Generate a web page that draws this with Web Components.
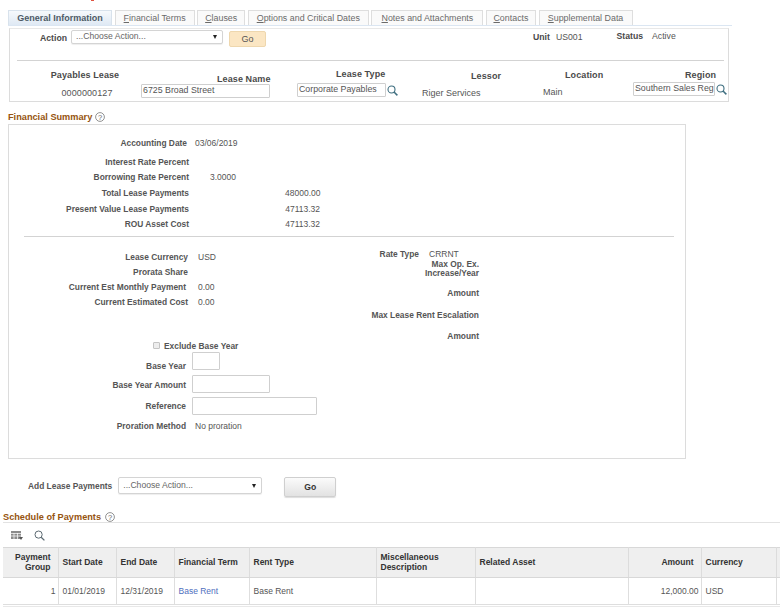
<!DOCTYPE html>
<html>
<head>
<meta charset="utf-8">
<title>Lease</title>
<style>
  html, body { margin: 0; padding: 0; background: #fff; }
  body { font: 8.5px "Liberation Sans", Arial, sans-serif; color: #555; width: 783px; height: 612px; overflow: hidden; }
</style>
</head>
<body>
<ps-tabs></ps-tabs>
<ps-lease-header></ps-lease-header>
<ps-title help-gap="3" left="8" top="9">Financial Summary</ps-title>
<ps-summary></ps-summary>
<ps-add-payments></ps-add-payments>
<ps-title help-gap="4" left="3" top="14">Schedule of Payments</ps-title>
<ps-schedule></ps-schedule>

<script>
const SEARCH_ICON = `<svg width="11" height="11" viewBox="0 0 11 11" fill="none" stroke="#3f6f80" stroke-width="1.1" style="flex:none"><circle cx="4.5" cy="4.5" r="3.5"/><path d="M7 7l3.4 3.4" stroke-width="1.5"/></svg>`;

class PsTabs extends HTMLElement {
    constructor() {
        super();
        this.attachShadow({ mode: 'open' });
    }

    connectedCallback() {
        const tabs = [
            ['General Information', 104, ''],
            ['Financial Terms', 80, 'F'],
            ['Clauses', 48, 'C'],
            ['Options and Critical Dates', 121, 'O'],
            ['Notes and Attachments', 112, 'N'],
            ['Contacts', 50, 'C'],
            ['Supplemental Data', 94, 'S']
        ];
        const html = tabs.map(([name, w, key], i) => {
            const label = key ? `<u>${key}</u>${name.slice(1)}` : name;
            return `<div class="tab ${i === 0 ? 'on' : ''}" style="width:${w}px">${label}</div>`;
        }).join('');
        this.shadowRoot.innerHTML = `
            <style>
                :host { display: block; height: 26px; width: 724px; margin-left: 8px; box-sizing: border-box; border-bottom: 1px solid #dbe6f2; position: relative; }
                .row { display: flex; gap: 2.6px; padding-top: 10px; }
                .tab { height: 15px; line-height: 15px; box-sizing: border-box; border: 1px solid #dedede; border-bottom: 0; text-align: center; font-size: 8.9px; color: #6a6a6a; background: #fafafa; white-space: nowrap; }
                .on { font-weight: bold; font-size: 9px; color: #4d5a66; background: linear-gradient(#f6f9fc, #dfe9f4); border-color: #d8e2ec; }
                .mark { position: absolute; left: 83px; top: 0; width: 3px; height: 1px; background: #e0523f; }
            </style>
            <div class="mark"></div>
            <div class="row">${html}</div>
        `;
    }
}
customElements.define('ps-tabs', PsTabs);

class PsSelect extends HTMLElement {
    constructor() {
        super();
        this.attachShadow({ mode: 'open' });
    }

    connectedCallback() {
        const w = this.getAttribute('w') || 144;
        this.shadowRoot.innerHTML = `
            <style>
                :host { display: flex; flex: none; align-items: center; justify-content: space-between; box-sizing: border-box; width: ${w}px; height: 17px; padding: 0 5px 2px 4px; border: 1px solid #d4d4d4; border-radius: 2px; background: #fff; font-size: 8.6px; color: #666; box-shadow: 0 1px 1px #eee; }
                i { width: 0; height: 0; border: 2.5px solid transparent; border-top: 4px solid #222; border-bottom: 0; margin-top: 2px; }
            </style>
            <span>...Choose Action...</span><i></i>
        `;
    }
}
customElements.define('ps-select', PsSelect);

class PsInput extends HTMLElement {
    constructor() {
        super();
        this.attachShadow({ mode: 'open' });
    }

    connectedCallback() {
        const w = this.getAttribute('w') || 78;
        const h = this.getAttribute('h') || 14;
        this.shadowRoot.innerHTML = `
            <style>
                :host { display: block; flex: none; box-sizing: border-box; width: ${w}px; height: ${h}px; line-height: ${h - 3}px; border: 1px solid #cfcfcf; border-radius: 1px; background: #fff; font-size: 8.8px; color: #555; overflow: hidden; white-space: nowrap; padding-left: 1px; }
            </style>
            <slot></slot>
        `;
    }
}
customElements.define('ps-input', PsInput);

class PsLeaseHeader extends HTMLElement {
    constructor() {
        super();
        this.attachShadow({ mode: 'open' });
    }

    connectedCallback() {
        this.shadowRoot.innerHTML = `
            <style>
                :host { display: block; box-sizing: border-box; width: 720px; height: 74px; margin: 2px 0 0 9px; border: 1px solid #dcdcdc; border-top-color: #e8e8e8; }
                b { color: #4a4a4a; }
                .action { display: flex; height: 30px; padding-top: 1px; }
                .action > b { margin: 3px 4px 0 30px; font-size: 8.7px; }
                ps-select { width: 152px; height: 14px; margin-top: 0; }
                .go { width: 37px; height: 16px; margin: 1px 0 0 6px; box-sizing: border-box; border: 1px solid #eed7ae; border-radius: 2px; background: #fbe6c3; text-align: center; line-height: 15px; font-size: 9px; color: #555; }
                .unit { margin-left: 267px; display: flex; gap: 6px; padding-top: 2px; font-size: 8.7px; }
                .status { margin-left: 34px; display: flex; gap: 9px; padding-top: 1px; font-size: 8.7px; }
                hr { margin: 0 4px 0 7px; height: 1px; border: 0; background: #d3d3d3; }
                .cols { display: grid; grid-template-columns: 124px 158px 120px 128px 113px 77px; margin-left: 7px; }
                .col { display: flex; flex-direction: column; align-items: flex-start; box-sizing: border-box; font-size: 9px; height: 40px; padding-top: 9px; }
                .col b { letter-spacing: .1px; white-space: nowrap; }
                .col span { white-space: nowrap; }
                .ifield { display: flex; align-items: center; gap: 1px; }
            </style>
            <div class="action">
                <b>Action</b><ps-select></ps-select><div class="go">Go</div>
                <div class="unit"><b>Unit</b><span>US001</span></div>
                <div class="status"><b>Status</b><span>Active</span></div>
            </div>
            <hr>
            <div class="cols">
                <div class="col" style="align-items:center;padding-left:12px"><b>Payables Lease</b><span style="margin:8px 0 0 4px;letter-spacing:.1px">0000000127</span></div>
                <div class="col" style="padding-top:13px"><b style="margin-left:76px">Lease Name</b><ps-input w="129">6725 Broad Street</ps-input></div>
                <div class="col" style="padding-top:8px"><b style="margin-left:37px">Lease Type</b><div class="ifield" style="margin:4px 0 0 -2px"><ps-input w="89">Corporate Payables</ps-input>${SEARCH_ICON}</div></div>
                <div class="col" style="padding-top:10px"><b style="margin-left:52px">Lessor</b><span style="margin:7px 0 0 3px">Riger Services</span></div>
                <div class="col"><b style="margin-left:18px">Location</b><span style="margin:7px 0 0 -4px">Main</span></div>
                <div class="col"><b style="margin-left:25px">Region</b><div class="ifield" style="margin:2px 0 0 -27px"><ps-input w="82">Southern Sales Reg</ps-input>${SEARCH_ICON}</div></div>
            </div>
        `;
    }
}
customElements.define('ps-lease-header', PsLeaseHeader);

class PsTitle extends HTMLElement {
    constructor() {
        super();
        this.attachShadow({ mode: 'open' });
    }

    connectedCallback() {
        const gap = this.getAttribute('help-gap') || 3;
        const left = this.getAttribute('left') || 0;
        const top = this.getAttribute('top') || 0;
        this.shadowRoot.innerHTML = `
            <style>
                :host { display: flex; align-items: center; height: 12px; margin: ${top}px 0 0 ${left}px; gap: ${gap}px; font-size: 9.2px; font-weight: bold; color: #96540f; white-space: nowrap; }
                svg { flex: none; }
                text { font: 7.5px "Liberation Sans", Arial, sans-serif; fill: #666; }
            </style>
            <slot></slot>
            <svg width="10" height="10" viewBox="0 0 10 10"><circle cx="5" cy="5" r="4.4" fill="none" stroke="#777" stroke-width=".8"/><text x="5" y="7.6" text-anchor="middle">?</text></svg>
        `;
    }
}
customElements.define('ps-title', PsTitle);

// one label/value line: label is right aligned in a column of width w
class PsField extends HTMLElement {
    constructor() {
        super();
        this.attachShadow({ mode: 'open' });
    }

    connectedCallback() {
        const w = this.getAttribute('w') || 100;
        const h = this.getAttribute('h') || 15;
        const gap = this.getAttribute('gap') || 6;
        const drop = this.getAttribute('drop') || 0;
        this.shadowRoot.innerHTML = `
            <style>
                :host { display: flex; align-items: center; height: ${h}px; white-space: nowrap; font-size: 8.5px; color: #555; }
                .label { width: ${w}px; flex: none; text-align: right; font-weight: bold; font-size: 8.4px; color: #555; margin-right: ${gap}px; padding-top: ${drop}px; }
            </style>
            <div class="label">${this.getAttribute('label') || ''}</div>
            <slot></slot>
        `;
    }
}
customElements.define('ps-field', PsField);

class PsSummary extends HTMLElement {
    constructor() {
        super();
        this.attachShadow({ mode: 'open' });
    }

    connectedCallback() {
        this.shadowRoot.innerHTML = `
            <style>
                :host { display: block; box-sizing: border-box; width: 678px; height: 335px; margin: 1px 0 0 8px; padding-top: 10px; border: 1px solid #dcdcdc; }
                .top { height: 101px; }
                .top .num { width: 35px; text-align: right; margin-left: 96px; }
                hr { margin: 0 11px 0 15px; height: 1px; border: 0; background: #d3d3d3; }
                .two { display: grid; grid-template-columns: 355px 1fr; padding-top: 11px; height: 102px; box-sizing: border-box; }
                .check { display: flex; align-items: center; height: 13px; margin-left: 144px; font-weight: bold; font-size: 8.4px; color: #555; white-space: nowrap; }
                .check i { width: 5px; height: 5px; border: 1px solid #c4c4c4; background: #ededed; border-radius: 1px; margin-right: 4px; }
            </style>
            <div class="top">
                <ps-field w="178" gap="8" h="16" label="Accounting Date">03/06/2019</ps-field>
                <ps-field w="180" gap="20" h="18" label="Interest Rate Percent" style="margin-top:2px"></ps-field>
                <ps-field w="180" gap="21" h="16" label="Borrowing Rate Percent" style="margin-top:-2px">3.0000</ps-field>
                <ps-field w="180" gap="0" h="16" label="Total Lease Payments"><span class="num">48000.00</span></ps-field>
                <ps-field w="180" gap="0" h="15" label="Present Value Lease Payments"><span class="num">47113.32</span></ps-field>
                <ps-field w="180" gap="0" h="16" label="ROU Asset Cost"><span class="num">47113.32</span></ps-field>
            </div>
            <hr>
            <div class="two">
                <div style="padding-top:1px">
                    <ps-field w="179" gap="10" h="15" label="Lease Currency">USD</ps-field>
                    <ps-field w="179" gap="10" h="15" label="Prorata Share"></ps-field>
                    <ps-field w="177" gap="12" h="15" label="Current Est Monthly Payment">0.00</ps-field>
                    <ps-field w="179" gap="10" h="15" label="Current Estimated Cost">0.00</ps-field>
                </div>
                <div>
                    <ps-field w="55" gap="10" h="10" label="Rate Type" style="margin-top:1px">CRRNT</ps-field>
                    <ps-field w="115" gap="0" h="9" label="Max Op. Ex."></ps-field>
                    <ps-field w="115" gap="0" h="9" label="Increase/Year"></ps-field>
                    <ps-field w="115" gap="0" h="11" label="Amount" style="margin-top:10px"></ps-field>
                    <ps-field w="115" gap="0" h="11" label="Max Lease Rent Escalation" style="margin-top:11px"></ps-field>
                    <ps-field w="115" gap="0" h="11" label="Amount" style="margin-top:10px"></ps-field>
                </div>
            </div>
            <div>
                <div class="check"><i></i>Exclude Base Year</div>
                <ps-field w="177" gap="6" h="18" drop="10" label="Base Year"><ps-input w="28" h="18"></ps-input></ps-field>
                <ps-field w="177" gap="6" h="18" drop="2" label="Base Year Amount" style="margin-top:5px"><ps-input w="78" h="18"></ps-input></ps-field>
                <ps-field w="177" gap="6" h="18" label="Reference" style="margin-top:4px"><ps-input w="125" h="18"></ps-input></ps-field>
                <ps-field w="177" gap="9" h="14" label="Proration Method" style="margin-top:4px">No proration</ps-field>
            </div>
        `;
    }
}
customElements.define('ps-summary', PsSummary);

class PsAddPayments extends HTMLElement {
    constructor() {
        super();
        this.attachShadow({ mode: 'open' });
    }

    connectedCallback() {
        this.shadowRoot.innerHTML = `
            <style>
                :host { display: flex; height: 20px; margin: 18px 0 0 28px; font-size: 8.4px; }
                b { color: #555; margin: 4px 6px 0 0; white-space: nowrap; }
                .go { width: 52px; height: 20px; margin-left: 22px; box-sizing: border-box; border: 1px solid #cfcfcf; border-radius: 2px; background: linear-gradient(#fbfbfb, #e2e2e2); text-align: center; line-height: 19px; font-weight: bold; font-size: 8.6px; color: #333; box-shadow: 0 1px 1px #ddd; }
            </style>
            <b>Add Lease Payments</b><ps-select w="144"></ps-select><div class="go">Go</div>
        `;
    }
}
customElements.define('ps-add-payments', PsAddPayments);

class PsSchedule extends HTMLElement {
    constructor() {
        super();
        this.attachShadow({ mode: 'open' });
    }

    connectedCallback() {
        const cols = [55, 58, 58, 75, 127, 99, 153, 73, 75, 4];
        const heads = ['Payment<br>Group', 'Start Date', 'End Date', 'Financial Term', 'Rent Type', 'Miscellaneous<br>Description', 'Related Asset', 'Amount', 'Currency', ''];
        const cells = ['1', '01/01/2019', '12/31/2019', '<a>Base Rent</a>', 'Base Rent', '', '', '12,000.00', 'USD', ''];
        const rightAligned = [0, 7];
        const cls = i => rightAligned.includes(i) ? ' class="r"' : '';
        this.shadowRoot.innerHTML = `
            <style>
                :host { display: block; width: 777px; margin: -1px 0 0 3px; }
                .tools { height: 25px; box-sizing: border-box; border-top: 1px solid #e2e2e2; display: flex; align-items: center; gap: 11px; padding: 1px 0 0 8px; }
                table { border-collapse: collapse; table-layout: fixed; width: 777px; font-size: 8.5px; }
                th { height: 29px; padding: 0 3px 0 4px; background: #efefef; font-weight: bold; color: #333; text-align: left; line-height: 9.5px; border-top: 1px solid #d8d8d8; border-bottom: 1px solid #d8d8d8; border-right: 1px solid #dcdcdc; }
                td { height: 26px; padding: 0 3px 0 4px; color: #555; white-space: nowrap; border-bottom: 1px solid #dedede; border-right: 1px solid #dedede; }
                th.r { text-align: right; padding-right: 7px; }
                td.r { text-align: right; padding-right: 2px; }
                th:last-child, td:last-child { border-right: 0; }
                a { color: #4f6fbe; }
                .end { height: 1px; margin-top: 1px; background: #e8e8e8; }
            </style>
            <div class="tools">
                <svg width="12" height="11" viewBox="0 0 12 11"><rect x="0" y="1" width="10" height="8" fill="#8b8b8b"/><path d="M0 3.5h10M0 6h10M3 3v6M6.5 3v6" stroke="#fff" stroke-width=".7"/><path d="M8 7h4l-2 3z" fill="#555"/></svg>
                <svg width="11" height="11" viewBox="0 0 11 11" fill="none" stroke="#5c6a72" stroke-width="1"><circle cx="4.6" cy="4.6" r="3.6"/><path d="M7.2 7.2l3.2 3.2" stroke-width="1.3"/></svg>
            </div>
            <table>
                <colgroup>${cols.map(w => `<col style="width:${w}px">`).join('')}</colgroup>
                <tr>${heads.map((h, i) => `<th${cls(i)}>${h}</th>`).join('')}</tr>
                <tr>${cells.map((c, i) => `<td${cls(i)}>${c}</td>`).join('')}</tr>
            </table>
            <div class="end"></div>
        `;
    }
}
customElements.define('ps-schedule', PsSchedule);
</script>
</body>
</html>
